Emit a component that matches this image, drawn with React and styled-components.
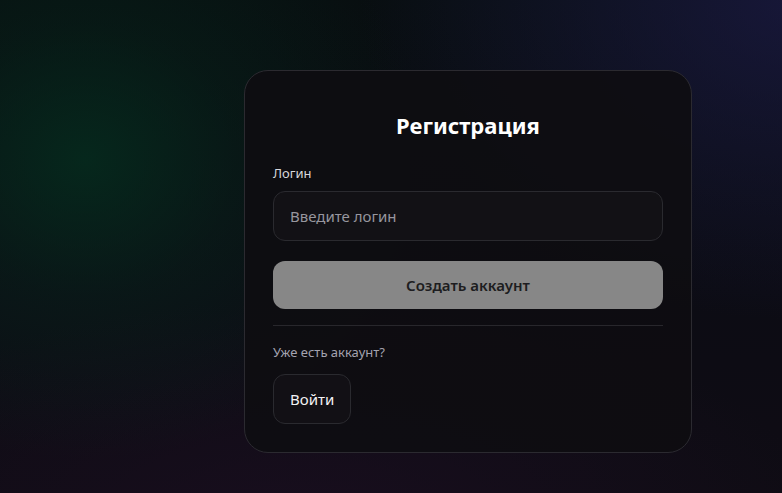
import React from "react";
import styled, { createGlobalStyle } from "styled-components";

const Global = createGlobalStyle`
  html, body { margin: 0; padding: 0; height: 100%; }
  body {
    font-family: "Noto Sans", "Open Sans", sans-serif;
    background: #0b0b10;
  }
  #root { min-height: 100%; }
  * { box-sizing: border-box; }
`;

const Page = styled.div`
  width: 782px;
  height: 493px;
  overflow: hidden;
  display: flex;
  align-items: flex-start;
  padding: 70px 0 0 244px;
  background:
    radial-gradient(ellipse 340px 300px at 85px 160px, rgba(5, 44, 30, 0.85), rgba(5, 44, 30, 0.35) 45%, rgba(5, 44, 30, 0) 100%),
    radial-gradient(ellipse 440px 320px at 800px 0px, rgba(28, 26, 70, 0.75), rgba(28, 26, 70, 0) 100%),
    radial-gradient(ellipse 520px 220px at 300px 520px, rgba(26, 14, 32, 0.8), rgba(26, 14, 32, 0) 100%),
    linear-gradient(180deg, #080e10 0%, #0c0c14 60%, #0f0c14 100%);
`;

const Card = styled.div`
  width: 448px;
  padding: 36px 28px 28px;
  border: 1px solid #2b2a30;
  border-radius: 24px;
  background: rgba(14, 13, 17, 0.92);
  display: flex;
  flex-direction: column;
`;

const Title = styled.h1`
  margin: 0 0 21px;
  text-align: center;
  color: #ffffff;
  font-size: 22px;
  font-weight: 700;
  line-height: 36px;
`;

const Label = styled.label`
  color: #d8d8dc;
  font-size: 13px;
  line-height: 18px;
  margin-bottom: 9px;
`;

const Input = styled.input`
  height: 50px;
  border-radius: 12px;
  border: 1px solid #2a2a2f;
  background: #121115;
  padding: 0 16px;
  font-family: inherit;
  font-size: 15px;
  color: #e0e0e0;
  outline: none;
  &::placeholder { color: #97969e; }
`;

const Button = styled.button`
  font-family: inherit;
  font-size: 15px;
  cursor: pointer;
  border-radius: 12px;
  ${(p) =>
    p.$primary
      ? `
    margin-top: 20px;
    height: 48px;
    width: 100%;
    border: none;
    background: #878787;
    color: #1d1d20;
    font-weight: 600;
  `
      : `
    height: 50px;
    align-self: flex-start;
    padding: 0 16px;
    border: 1px solid #2a2a2f;
    background: #121015;
    color: #f2f2f4;
    font-weight: 400;
  `}
`;

const Divider = styled.hr`
  border: none;
  border-top: 1px solid #28272c;
  margin: 16px 0 0;
`;

const Muted = styled.p`
  margin: 17px 0 13px;
  color: #a4a3b0;
  font-size: 13px;
  line-height: 18px;
`;

export default function App() {
  return (
    <>
      <Global />
      <Page>
        <Card>
          <Title>Регистрация</Title>
          <Label htmlFor="login">Логин</Label>
          <Input id="login" placeholder="Введите логин" />
          <Button $primary>Создать аккаунт</Button>
          <Divider />
          <Muted>Уже есть аккаунт?</Muted>
          <Button>Войти</Button>
        </Card>
      </Page>
    </>
  );
}
